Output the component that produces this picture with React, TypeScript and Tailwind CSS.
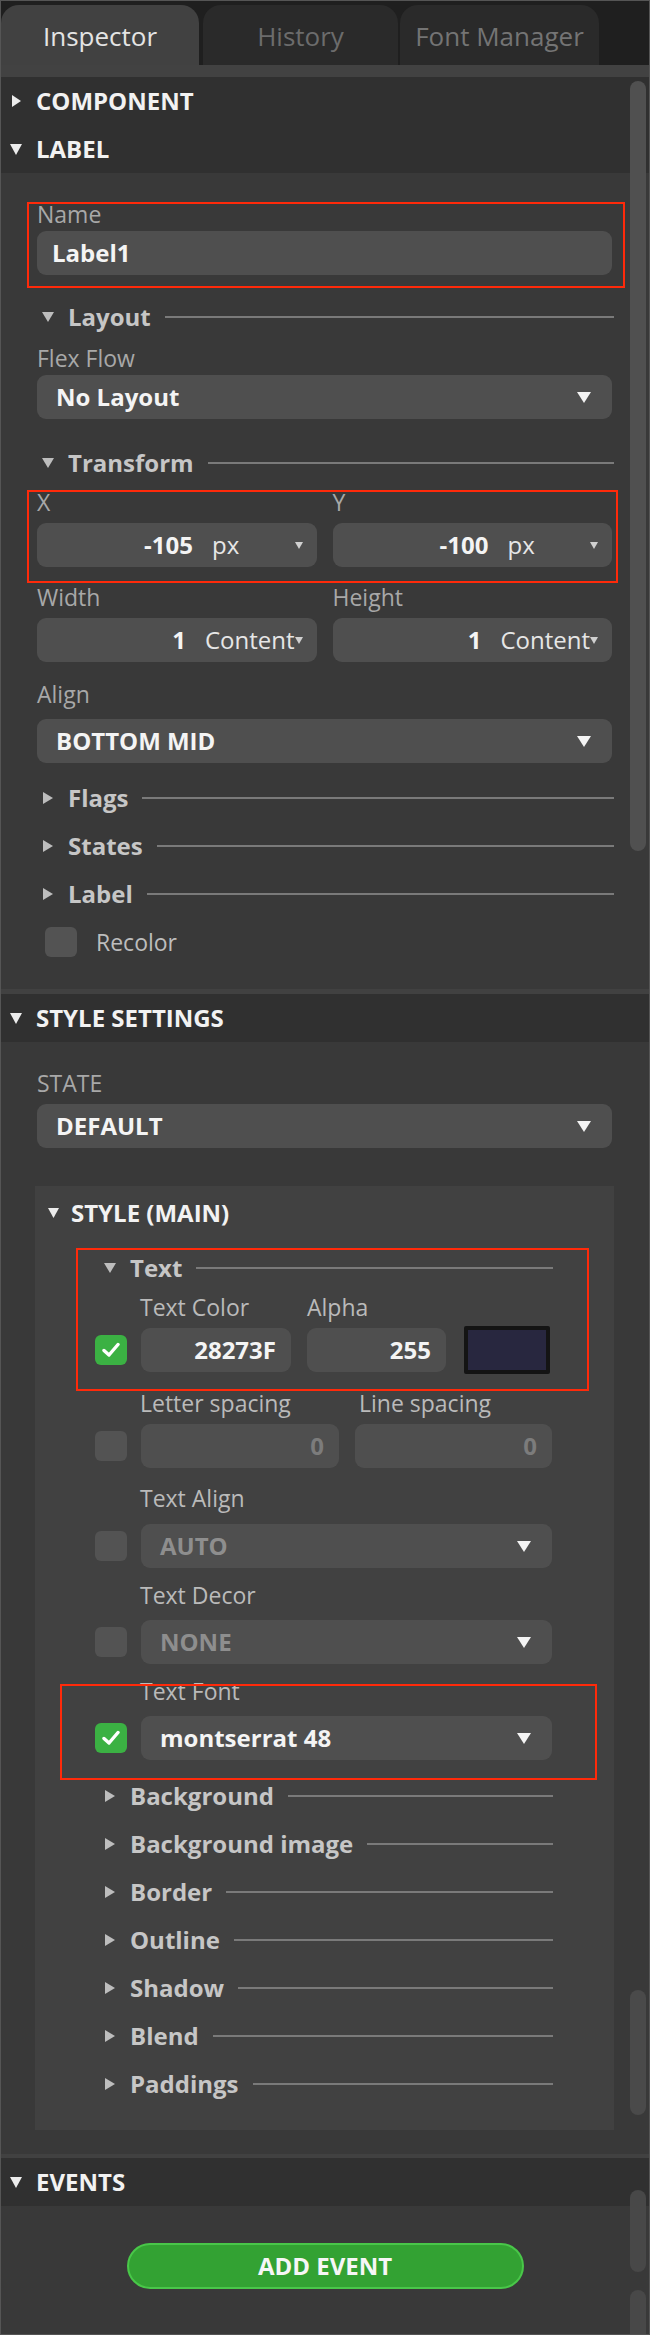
import React from 'react';

type Dir = 'down' | 'right';

function Tri({ dir, w, h }: { dir: Dir; w: number; h: number }) {
  const pts = dir === 'down' ? `0,0 ${w},0 ${w / 2},${h}` : `0,0 ${w},${h / 2} 0,${h}`;
  return (
    <svg width={w} height={h} viewBox={`0 0 ${w} ${h}`} className="block">
      <polygon points={pts} fill="currentColor" />
    </svg>
  );
}

function SectionHeader({ title, open }: { title: string; open?: boolean }) {
  return (
    <div className="h-[48px] bg-[#303030] flex items-center pl-[9px]">
      <div className="w-[12px] flex justify-center text-[#ececec]">
        {open ? <Tri dir="down" w={12} h={11} /> : <Tri dir="right" w={9} h={12} />}
      </div>
      <span className="ml-[14px] text-[24px] font-bold text-[#f2f2f2] leading-none">{title}</span>
    </div>
  );
}

function Sub({ title, open, className = '' }: { title: string; open?: boolean; className?: string }) {
  return (
    <div className={`h-[40px] flex items-center ${className}`}>
      <div className="w-[14px] flex justify-center text-[#bdbdbd]">
        {open ? <Tri dir="down" w={12} h={10} /> : <Tri dir="right" w={10} h={12} />}
      </div>
      <span className="ml-[13px] text-[24px] font-bold text-[#c6c6c6] leading-none">{title}</span>
      <div className="ml-[14px] flex-1 h-[2px] bg-[#7a7a7a]" />
    </div>
  );
}

function FieldLabel({ children, className = '' }: { children: React.ReactNode; className?: string }) {
  return <div className={`h-[32px] leading-[32px] text-[23px] text-[#a8a8a8] whitespace-nowrap ${className}`}>{children}</div>;
}

function Dropdown({ value, disabled, className = '' }: { value: string; disabled?: boolean; className?: string }) {
  return (
    <div className={`h-[44px] rounded-[9px] bg-[#4f4f4f] flex items-center pl-[19px] pr-[21px] ${className}`}>
      <span className={`flex-1 text-[24px] font-bold leading-none ${disabled ? 'text-[#8e8e8e]' : 'text-[#f4f4f4]'}`}>{value}</span>
      <div className="text-[#f4f4f4]">
        <Tri dir="down" w={14} h={11} />
      </div>
    </div>
  );
}

function UnitInput({ value, unit }: { value: string; unit: string }) {
  return (
    <div className="h-[44px] rounded-[9px] bg-[#4f4f4f] flex items-center">
      <div className="w-[166px] pr-[10px] text-right text-[24px] font-bold text-[#f4f4f4] leading-none">{value}</div>
      <div className="flex-1 flex items-center pl-[9px] pr-[14px] relative">
        <span className="text-[24px] text-[#e6e6e6] leading-none whitespace-nowrap">{unit}</span>
        <div className="ml-auto text-[#d0d0d0]">
          <Tri dir="down" w={8} h={7} />
        </div>
      </div>
    </div>
  );
}

function Check({ on }: { on?: boolean }) {
  return (
    <div className={`w-[32px] h-[30px] rounded-[6px] flex items-center justify-center shrink-0 ${on ? 'bg-[#3bb143]' : 'bg-[#535353]'}`}>
      {on && (
        <svg width="18" height="16" viewBox="0 0 18 16">
          <polyline points="2,8.5 7,13 16,2.5" fill="none" stroke="#ffffff" strokeWidth="3.4" strokeLinecap="round" strokeLinejoin="round" />
        </svg>
      )}
    </div>
  );
}

function NumBox({ value, disabled, className = '' }: { value: string; disabled?: boolean; className?: string }) {
  return (
    <div className={`h-[44px] rounded-[9px] bg-[#4f4f4f] flex items-center justify-end pr-[15px] text-[24px] font-bold leading-none ${disabled ? 'text-[#7c7c7c]' : 'text-[#f4f4f4]'} ${className}`}>
      {value}
    </div>
  );
}

function RedBox({ className }: { className: string }) {
  return <div className={`absolute border-[2px] border-[#ff2a0a] pointer-events-none ${className}`} />;
}

export default function App() {
  const collapsed = ['Background', 'Background image', 'Border', 'Outline', 'Shadow', 'Blend', 'Paddings'];
  return (
    <div className="relative w-[650px] h-[2335px] overflow-hidden border border-[#555555] bg-[#393939] font-['Open_Sans',sans-serif]">
      {/* tabs */}
      <div className="h-[64px] bg-[#1f1f1f] flex items-end">
        <div className="w-[198px] h-[60px] rounded-t-[18px] bg-[#414141] flex items-center justify-center pt-[3px] text-[26px] text-[#e4e4e4]">Inspector</div>
        <div className="ml-[4px] w-[195px] h-[60px] rounded-t-[18px] bg-[#2a2a2a] flex items-center justify-center pt-[3px] text-[26px] text-[#6c6c6c]">History</div>
        <div className="ml-[2px] w-[199px] h-[60px] rounded-t-[18px] bg-[#2a2a2a] flex items-center justify-center pt-[3px] text-[26px] text-[#747474]">Font Manager</div>
      </div>
      <div className="h-[12px] bg-[#424242]" />

      <SectionHeader title="COMPONENT" />
      <SectionHeader title="LABEL" open />

      {/* LABEL body */}
      <div className="pl-[36px] pr-[37px] pt-[25px] pb-[32px]">
        <div className="relative">
          <FieldLabel>Name</FieldLabel>
          <div className="mt-[1px] h-[44px] rounded-[9px] bg-[#4f4f4f] flex items-center pl-[15px] text-[24px] font-bold text-[#f4f4f4] leading-none">Label1</div>
          <RedBox className="top-[4px] -left-[10px] -right-[13px] -bottom-[13px]" />
        </div>

        <Sub title="Layout" open className="mt-[22px] pl-[4px] -mr-[2px]" />
        <FieldLabel className="mt-[5px]">Flex Flow</FieldLabel>
        <Dropdown value="No Layout" className="mt-[1px]" />

        <Sub title="Transform" open className="mt-[24px] pl-[4px] -mr-[2px]" />
        <div className="relative mt-[3px]">
          <div className="grid grid-cols-2 gap-x-[16px]">
            <FieldLabel>X</FieldLabel>
            <FieldLabel>Y</FieldLabel>
            <div className="mt-[5px]"><UnitInput value="-105" unit="px" /></div>
            <div className="mt-[5px]"><UnitInput value="-100" unit="px" /></div>
          </div>
          <RedBox className="top-[4px] -left-[10px] -right-[6px] -bottom-[16px]" />
        </div>

        <div className="mt-[14px] grid grid-cols-2 gap-x-[16px]">
          <FieldLabel>Width</FieldLabel>
          <FieldLabel>Height</FieldLabel>
          <div className="mt-[5px]"><UnitInput value="1" unit="Content" /></div>
          <div className="mt-[5px]"><UnitInput value="1" unit="Content" /></div>
        </div>

        <FieldLabel className="mt-[16px]">Align</FieldLabel>
        <Dropdown value="BOTTOM MID" className="mt-[9px]" />

        <Sub title="Flags" className="mt-[15px] pl-[4px] -mr-[2px]" />
        <Sub title="States" className="mt-[8px] pl-[4px] -mr-[2px]" />
        <Sub title="Label" className="mt-[8px] pl-[4px] -mr-[2px]" />

        <div className="mt-[13px] flex items-center pl-[8px]">
          <Check />
          <span className="ml-[19px] text-[23px] text-[#bdbdbd] leading-none">Recolor</span>
        </div>
      </div>

      <div className="h-[5px] bg-[#414141]" />
      <SectionHeader title="STYLE SETTINGS" open />

      {/* STYLE SETTINGS body */}
      <div className="pl-[36px] pr-[37px] pt-[25px] pb-[24px]">
        <FieldLabel>STATE</FieldLabel>
        <Dropdown value="DEFAULT" className="mt-[5px]" />

        <div className="mt-[38px] -mx-[2px] bg-[#414141] pt-[7px] pb-[26px]">
          <div className="h-[40px] flex items-center pl-[13px]">
            <div className="w-[11px] text-[#ececec]">
              <Tri dir="down" w={11} h={10} />
            </div>
            <span className="ml-[12px] text-[24px] font-bold text-[#f2f2f2] leading-none">STYLE (MAIN)</span>
          </div>

          <div className="relative mt-[15px]">
            <Sub title="Text" open className="pl-[68px] pr-[61px]" />
            <div className="mt-[3px] flex pl-[105px]">
              <FieldLabel className="w-[167px] text-[#bababa]">Text Color</FieldLabel>
              <FieldLabel className="text-[#bababa]">Alpha</FieldLabel>
            </div>
            <div className="mt-[5px] h-[44px] flex items-center pl-[60px]">
              <Check on />
              <NumBox value="28273F" className="ml-[14px] w-[150px]" />
              <NumBox value="255" className="ml-[16px] w-[139px]" />
              <div className="ml-[18px] w-[86px] h-[48px] rounded-[2px] border-[4px] border-[#141414] bg-[#28273f]" />
            </div>
            <RedBox className="top-0 left-[41px] right-[25px] -bottom-[19px]" />
          </div>

          <div className="mt-[15px] flex pl-[105px]">
            <FieldLabel className="w-[219px] text-[#bababa]">Letter spacing</FieldLabel>
            <FieldLabel className="text-[#bababa]">Line spacing</FieldLabel>
          </div>
          <div className="mt-[5px] h-[44px] flex items-center pl-[60px] pr-[62px]">
            <Check />
            <NumBox value="0" disabled className="ml-[14px] w-[198px]" />
            <NumBox value="0" disabled className="ml-[16px] flex-1" />
          </div>

          <FieldLabel className="mt-[14px] pl-[105px] text-[#bababa]">Text Align</FieldLabel>
          <div className="mt-[10px] flex items-center pl-[60px] pr-[62px]">
            <Check />
            <Dropdown value="AUTO" disabled className="ml-[14px] flex-1" />
          </div>

          <FieldLabel className="mt-[11px] pl-[105px] text-[#bababa]">Text Decor</FieldLabel>
          <div className="mt-[9px] flex items-center pl-[60px] pr-[62px]">
            <Check />
            <Dropdown value="NONE" disabled className="ml-[14px] flex-1" />
          </div>

          <div className="relative mt-[11px]">
            <FieldLabel className="pl-[105px] text-[#bababa]">Text Font</FieldLabel>
            <div className="mt-[9px] flex items-center pl-[60px] pr-[62px]">
              <Check on />
              <Dropdown value="montserrat 48" className="ml-[14px] flex-1" />
            </div>
            <RedBox className="top-[9px] left-[25px] right-[17px] -bottom-[20px]" />
          </div>

          <div className="mt-[16px] flex flex-col gap-[8px]">
            {collapsed.map((t) => (
              <Sub key={t} title={t} className="pl-[68px] pr-[61px]" />
            ))}
          </div>
        </div>
      </div>

      <div className="h-[4px] bg-[#414141]" />
      <SectionHeader title="EVENTS" open />

      <div className="pt-[37px]">
        <div className="mx-auto w-[397px] h-[46px] rounded-full bg-[#33a233] border-[2px] border-[#49c749] flex items-center justify-center text-[24px] font-bold text-[#f6f6f6] leading-none">
          ADD EVENT
        </div>
      </div>

      {/* scrollbars */}
      <div className="absolute left-[629px] top-[80px] w-[16px] h-[770px] rounded-full bg-[#505050]" />
      <div className="absolute left-[629px] top-[1989px] w-[16px] h-[125px] rounded-full bg-[#4a4a4a]" />
      <div className="absolute left-[629px] top-[2189px] w-[16px] h-[82px] rounded-full bg-[#484848]" />
      <div className="absolute left-[629px] top-[2289px] w-[16px] h-[80px] rounded-full bg-[#484848]" />
    </div>
  );
}
